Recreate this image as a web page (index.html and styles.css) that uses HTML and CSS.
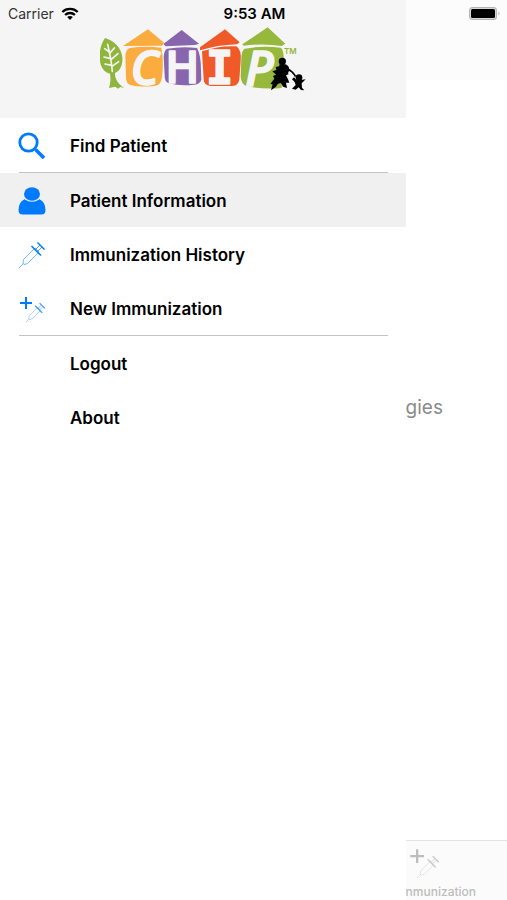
FILE: index.html
```html
<!DOCTYPE html>
<html lang="en">
	<head>
		<meta charset="utf-8">
		<meta name="viewport" content="width=device-width, initial-scale=1">
		<title>CHIP</title>
		<link rel="stylesheet" href="styles.css">
	</head>
	<body>
		<!-- shared icons -->
		<svg class="defs" width="0" height="0" aria-hidden="true">
			<symbol id="syringe" viewBox="0 0 28 28">
				<g fill="none" stroke="currentColor">
					<path stroke-width="0.900" stroke-opacity="0.600" d="M1 27 L5.500 22.500 M5.500 18.500 L5 22.500 L6 23.500 L9.500 22.500 L21 11 L17 7 Z"/>
					<path stroke-width="1.600" d="M13.500 5 L23 14.500"/>
					<path stroke-width="1" stroke-opacity="0.700" d="M18 8 L22 4 M20 10 L24 6"/>
					<path stroke-width="1.400" d="M19.500 1.500 L26.500 8.500"/>
				</g>
			</symbol>
			<symbol id="add-syringe" viewBox="0 0 28 28">
				<path fill="none" stroke="currentColor" stroke-width="2" d="M8 2 v12 M2 8 h12"/>
				<use href="#syringe" x="7" y="7" width="21" height="21" opacity="0.800"/>
			</symbol>
		</svg>

		<div class="status-bar">
			<div class="carrier">
				<span>Carrier</span>
				<svg width="18" height="14" viewBox="0 0 18 14" aria-hidden="true">
					<g fill="none" stroke="#000" stroke-width="2.300">
						<path d="M1.300 5 C5.500 0.800 12.500 0.800 16.700 5"/>
						<path d="M4.100 8 C6.800 5.300 11.200 5.300 13.900 8"/>
					</g>
					<path d="M6.200 10 C7.800 8.600 10.200 8.600 11.800 10 L9 13 Z"/>
				</svg>
			</div>
			<div class="time">9:53 AM</div>
			<div class="battery">
				<svg width="32" height="14" viewBox="0 0 32 14" aria-hidden="true">
					<rect x="0" y="0" width="28" height="13" rx="3.500" fill="#b4b4b4"/>
					<rect x="1" y="1" width="26" height="11" rx="2.500" fill="#d8d8d8"/>
					<rect x="2" y="2" width="24" height="9" rx="1.500"/>
					<path d="M29.500 4.500 q2 2 0 4 z" fill="#a8a8a8"/>
				</svg>
			</div>
		</div>

		<aside class="drawer">
			<header class="drawer-header">
				<svg class="logo" width="206" height="66" viewBox="30 18 618 198" role="img" aria-label="CHIP">
					<!-- tree -->
					<g fill="#8fb63c">
						<path d="M45 54 C72 62 94 82 97 112 C99 138 88 154 75 159 C74 177 87 194 103 204 L91 201 L84 206 L76 200 L57 204 C62 187 62 174 60 161 C39 156 28 136 29 107 C29 84 37 65 45 54 Z"/>
						<path fill="none" stroke="#f5f5f5" stroke-width="5" stroke-linecap="round" d="M53 73 C59 100 65 125 67 154 M58 96 L44 86 M59 100 L73 84 M62 116 L42 111 M63 119 L84 101 M65 136 L45 132 M66 139 L86 125"/>
					</g>
					<!-- houses -->
					<g fill="#fbac3f">
						<path d="M99 78 L174 28 L222 68 L217 77 Z"/>
						<path d="M119 84 Q165 77 214 83 Q222 120 216 171 Q213 197 193 198 Q150 202 123 196 Q108 191 108 173 L106 106 Q108 88 119 84 Z"/>
					</g>
					<g fill="#8866ad">
						<path d="M220 72 L275 30 L327 71 L315 75 L227 79 Z"/>
						<path d="M231 86 Q278 78 321 84 Q333 104 333 152 L334 179 Q330 192 313 194 Q270 199 237 190 Q223 186 224 165 L221 111 Q222 91 231 86 Z"/>
					</g>
					<g fill="#f05a28">
						<path d="M330 82 L405 28 L449 67 L441 73 Q382 75 330 91 Z"/>
						<path d="M336 94 Q389 76 439 79 Q455 88 452 124 L448 179 Q445 196 427 198 L362 198 Q341 196 341 177 Z"/>
					</g>
					<g fill="#95b83d">
						<path d="M457 73 L533 22 L586 71 L575 78 Q519 69 461 77 Z"/>
						<path d="M464 86 Q518 76 572 83 Q583 91 581 129 L575 204 Q516 209 470 198 Q454 193 452 170 L454 115 Q455 91 464 86 Z"/>
					</g>
					<g class="logo-letters">
						<text x="122" y="196" font-size="140" font-style="italic">C</text>
						<text x="226" y="190" font-size="136">H</text>
						<text class="slab" x="348" y="193" font-size="136">I</text>
						<text x="466" y="198" font-size="144" font-style="italic">P</text>
					</g>
					<text class="logo-tm" x="582" y="101" font-size="24">TM</text>
					<!-- mother and child -->
					<g>
						<circle cx="577" cy="124" r="11"/>
						<path d="M568 133 L587 133 Q598 138 598 150 L594 160 L596 163 L588 166 L594 178 L598 188 L588 188 L591 204 L579 200 L573 189 L564 191 L557 201 L543 211 L548 193 L541 192 L553 176 L549 168 L558 164 L547 154 L559 150 L557 141 L568 139 Z"/>
						<path fill="none" stroke="#000" stroke-width="5" d="M593 148 Q607 152 617 170"/>
						<circle cx="627" cy="173" r="10"/>
						<path d="M612 172 L620 181 L633 180 L647 178 L635 190 L636 203 L643 211 L633 210 L626 202 L617 209 L606 206 L617 195 L614 186 L606 178 Z"/>
					</g>
				</svg>
			</header>
			<nav>
				<ul class="menu">
					<li>
						<a href="#find">
							<svg class="icon" viewBox="0 0 28 28" aria-hidden="true">
								<g fill="none" stroke="currentColor" stroke-width="2.800">
									<circle cx="10.500" cy="10.500" r="8.700"/>
									<path stroke-width="3.600" d="M17.500 17.500 L26 26"/>
								</g>
							</svg>
							<span>Find Patient</span>
						</a>
					</li>
					<li class="group">
						<a href="#patient" class="selected" aria-current="page">
							<svg class="icon" viewBox="0 0 28 28" aria-hidden="true">
								<g fill="currentColor">
									<ellipse cx="14" cy="7" rx="8" ry="6.800"/>
									<path d="M6.500 12.200 Q14 17.500 21.500 12.200 Q27.500 15 27.500 23 Q27.500 27.500 23.500 27.500 H4.500 Q0.500 27.500 0.500 23 Q0.500 15 6.500 12.200 Z"/>
								</g>
							</svg>
							<span>Patient Information</span>
						</a>
					</li>
					<li>
						<a href="#history">
							<svg class="icon" aria-hidden="true"><use href="#syringe"/></svg>
							<span>Immunization History</span>
						</a>
					</li>
					<li>
						<a href="#new">
							<svg class="icon" aria-hidden="true"><use href="#add-syringe"/></svg>
							<span>New Immunization</span>
						</a>
					</li>
					<li class="group">
						<a href="#logout"><span class="icon"></span><span>Logout</span></a>
					</li>
					<li>
						<a href="#about"><span class="icon"></span><span>About</span></a>
					</li>
				</ul>
			</nav>
		</aside>

		<div class="page">
			<div class="page-header"></div>
			<main class="page-content">gies</main>
			<a class="tab" href="#new">
				<svg class="tab-icon" aria-hidden="true"><use href="#add-syringe"/></svg>
				<span>nmunization</span>
			</a>
		</div>
	</body>
</html>
```

FILE: styles.css
```css
* {
	box-sizing: border-box;
}

body {
	margin: 0;
	min-height: 100vh;
	display: flex;
	position: relative;
	background-color: #fff;
	color: #000;
	font-family: Inter, "Liberation Sans", sans-serif;
}

a {
	color: inherit;
	text-decoration: none;
}

.defs {
	position: absolute;
}

/* status bar lies over the drawer and the page */
.status-bar {
	position: absolute;
	top: 0;
	left: 0;
	right: 0;
	display: grid;
	grid-template-columns: 1fr auto 1fr;
	align-items: center;
	height: 27px;
	padding: 0 6px 0 8px;
	font-size: 14px;
}

.carrier {
	display: flex;
	align-items: center;
	gap: 7px;
	color: #333;
}

.time {
	font-size: 15px;
	font-weight: 600;
}

.battery {
	display: flex;
	justify-content: flex-end;
}

.drawer {
	flex: 0 0 80%;
	background-color: #fff;
}

.drawer-header {
	display: flex;
	justify-content: center;
	height: 118px;
	padding-top: 26px;
	background-color: #f5f5f5;
}

.logo-letters {
	fill: #f5f5f5;
	stroke: #f5f5f5;
	stroke-width: 5px;
	stroke-linejoin: round;
	font-family: "Open Sans", sans-serif;
	font-weight: 600;
}

.slab {
	font-family: "DejaVu Sans Mono", monospace;
}

.logo-tm {
	fill: #95b83d;
	font-weight: 600;
}

.menu {
	list-style: none;
	margin: 0;
	padding: 0;
}

.menu a {
	display: flex;
	align-items: center;
	gap: 24px;
	height: 54px;
	padding: 1px 18px 0;
	font-size: 17px;
	font-weight: 600;
}

.menu .selected {
	background-color: #f0f0f0;
}

.group::before {
	content: "";
	display: block;
	height: 1px;
	margin: 0 18px 0 19px;
	background-color: #c4c4c4;
}

.icon {
	flex: none;
	width: 28px;
	height: 28px;
	color: #007aff;
}

.page {
	flex: 1;
	min-width: 0;
	display: flex;
	flex-direction: column;
	overflow: hidden;
}

.page-header {
	height: 80px;
	background-color: #fcfcfc;
}

.page-content {
	flex: 1;
	padding-top: 316px;
	color: #8a8a8a;
	font-size: 19px;
	line-height: 24px;
}

.tab {
	display: flex;
	flex-direction: column;
	gap: 5px;
	height: 60px;
	padding-top: 6px;
	border-top: 1px solid #e4e4e4;
	background-color: #fbfbfb;
	color: #bdbdbd;
	font-size: 12px;
	font-weight: 500;
}

.tab-icon {
	width: 32px;
	height: 32px;
	margin-left: 2px;
}
```
